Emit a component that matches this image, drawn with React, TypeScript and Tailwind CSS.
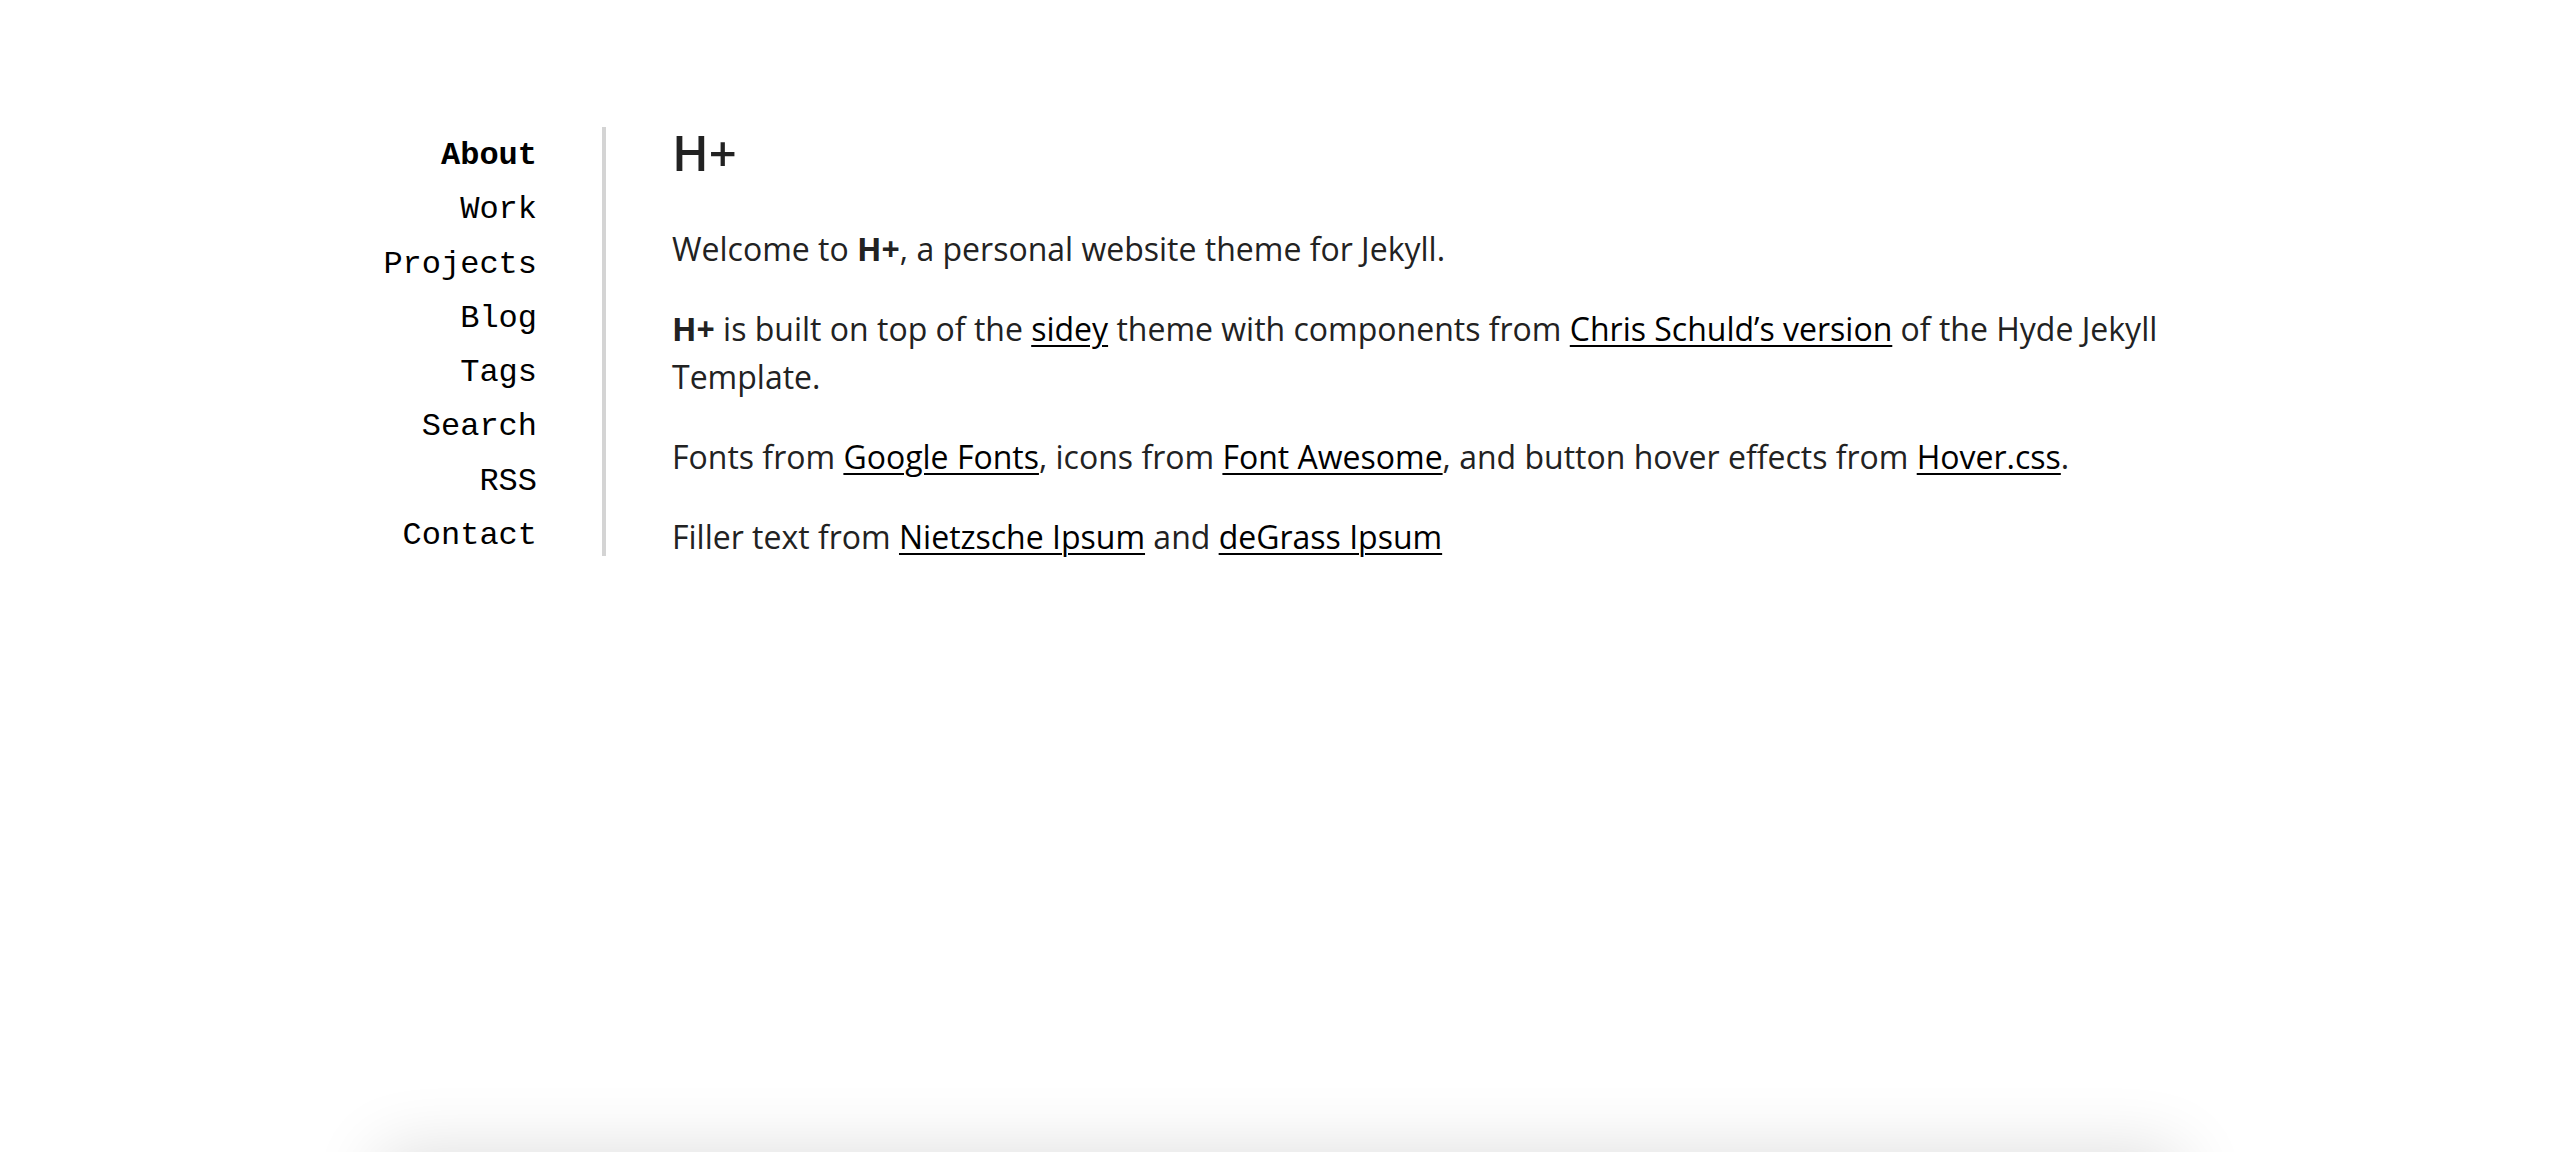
import React from "react";

const navItems = ["About", "Work", "Projects", "Blog", "Tags", "Search", "RSS", "Contact"];

function Link({ children }: { children: React.ReactNode }) {
  return (
    <a href="#" className="text-black underline decoration-[2px] underline-offset-[4px]">
      {children}
    </a>
  );
}

export default function App() {
  return (
    <div className="h-[1152px] overflow-hidden flex flex-col bg-white">
      <main className="w-[1800px] mx-auto mt-[127px] flex items-start">
        {/* Sidebar nav */}
        <nav className="w-[226px] h-[429px] shrink-0 border-r-4 border-[#d4d4d4] pt-[2px] pr-[65px] text-right font-['Liberation_Mono',monospace] text-[32px] leading-[54.3px] text-black">
          {navItems.map((item, i) => (
            <div key={item}>
              <a href="#" className={i === 0 ? "font-bold" : ""}>
                {item}
              </a>
            </div>
          ))}
        </nav>

        {/* Content */}
        <section className="flex-1 pl-[66px] font-['Open_Sans',sans-serif] text-[#222]">
          <h1 className="text-[49px] leading-[51px] font-semibold mb-[47px]">H+</h1>
          <p className="text-[32px] leading-[48px] mb-[32px]">
            Welcome to <strong className="font-bold">H+</strong>, a personal website theme for Jekyll.
          </p>
          <p className="text-[32px] leading-[48px] mb-[32px]">
            <strong className="font-bold">H+</strong> is built on top of the <Link>sidey</Link> theme with components from{" "}
            <Link>Chris Schuld’s version</Link> of the Hyde Jekyll Template.
          </p>
          <p className="text-[32px] leading-[48px] mb-[32px]">
            Fonts from <Link>Google Fonts</Link>, icons from <Link>Font Awesome</Link>, and button hover effects from{" "}
            <Link>Hover.css</Link>.
          </p>
          <p className="text-[32px] leading-[48px]">
            Filler text from <Link>Nietzsche Ipsum</Link> and <Link>deGrass Ipsum</Link>
          </p>
        </section>
      </main>

      {/* next card peeking below the fold */}
      <div className="mt-auto mb-[-200px] h-[200px] w-[1800px] mx-auto shrink-0 bg-white shadow-[0_0_70px_rgba(0,0,0,0.14)]" />
    </div>
  );
}
